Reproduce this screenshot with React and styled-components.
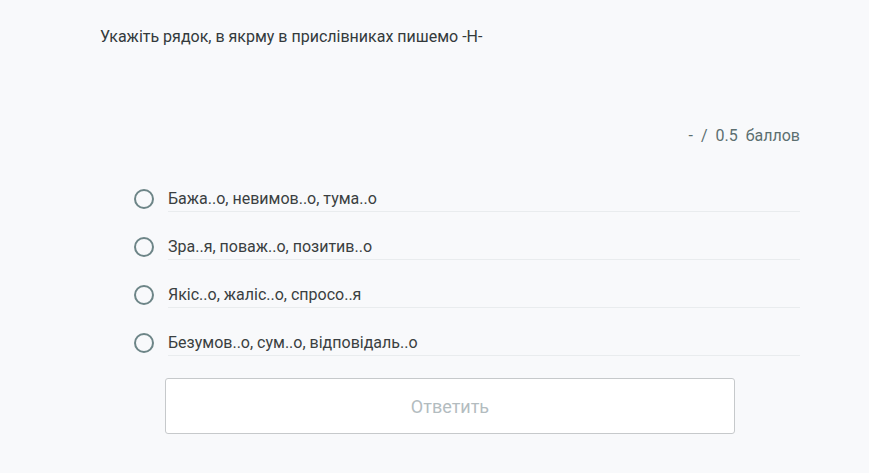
import React from 'react';
import styled, { createGlobalStyle } from 'styled-components';

const GlobalStyle = createGlobalStyle`
  body {
    margin: 0;
    background: #f8f9fb;
    font-family: Roboto, "Liberation Sans", sans-serif;
  }
`;

const Page = styled.div`
  width: 700px;
  padding: 27px 0 0 100px;
`;

const Question = styled.div`
  font-size: 16px;
  line-height: 20px;
  color: #333a3c;
`;

const Score = styled.div`
  margin-top: 79px;
  text-align: right;
  font-size: 16px;
  line-height: 20px;
  color: #5c6f70;
  word-spacing: 4px;
`;

const Options = styled.div`
  margin-top: 41px;
  padding-left: 34px;
  display: flex;
  flex-direction: column;
  gap: 24px;
`;

const Option = styled.label`
  display: flex;
  align-items: center;
  height: 24px;
  cursor: pointer;
`;

const Radio = styled.span`
  width: 16px;
  height: 16px;
  border: 2px solid #6d8587;
  border-radius: 50%;
  flex: none;
`;

const OptionText = styled.span`
  flex: 1;
  margin-left: 14px;
  height: 24px;
  line-height: 23px;
  font-size: 16px;
  color: #3a3f41;
  border-bottom: 1px solid #e9ecee;
`;

const Button = styled.button`
  display: block;
  margin: 23px 0 0 65px;
  width: 570px;
  height: 56px;
  background: #fff;
  border: 1px solid #c6c9cb;
  border-radius: 3px;
  font-family: inherit;
  font-size: 18px;
  color: #b3bcbf;
`;

const answers = [
  'Бажа..о, невимов..о, тума..о',
  'Зра..я, поваж..о, позитив..о',
  'Якіс..о, жаліс..о, спросо..я',
  'Безумов..о, сум..о, відповідаль..о',
];

const App = () => (
  <>
    <GlobalStyle />
    <Page>
      <Question>Укажіть рядок, в якрму в прислівниках пишемо -Н-</Question>
      <Score>- / 0.5 баллов</Score>
      <Options>
        {answers.map((a) => (
          <Option key={a}>
            <Radio />
            <OptionText>{a}</OptionText>
          </Option>
        ))}
      </Options>
      <Button>Ответить</Button>
    </Page>
  </>
);

export default App;
